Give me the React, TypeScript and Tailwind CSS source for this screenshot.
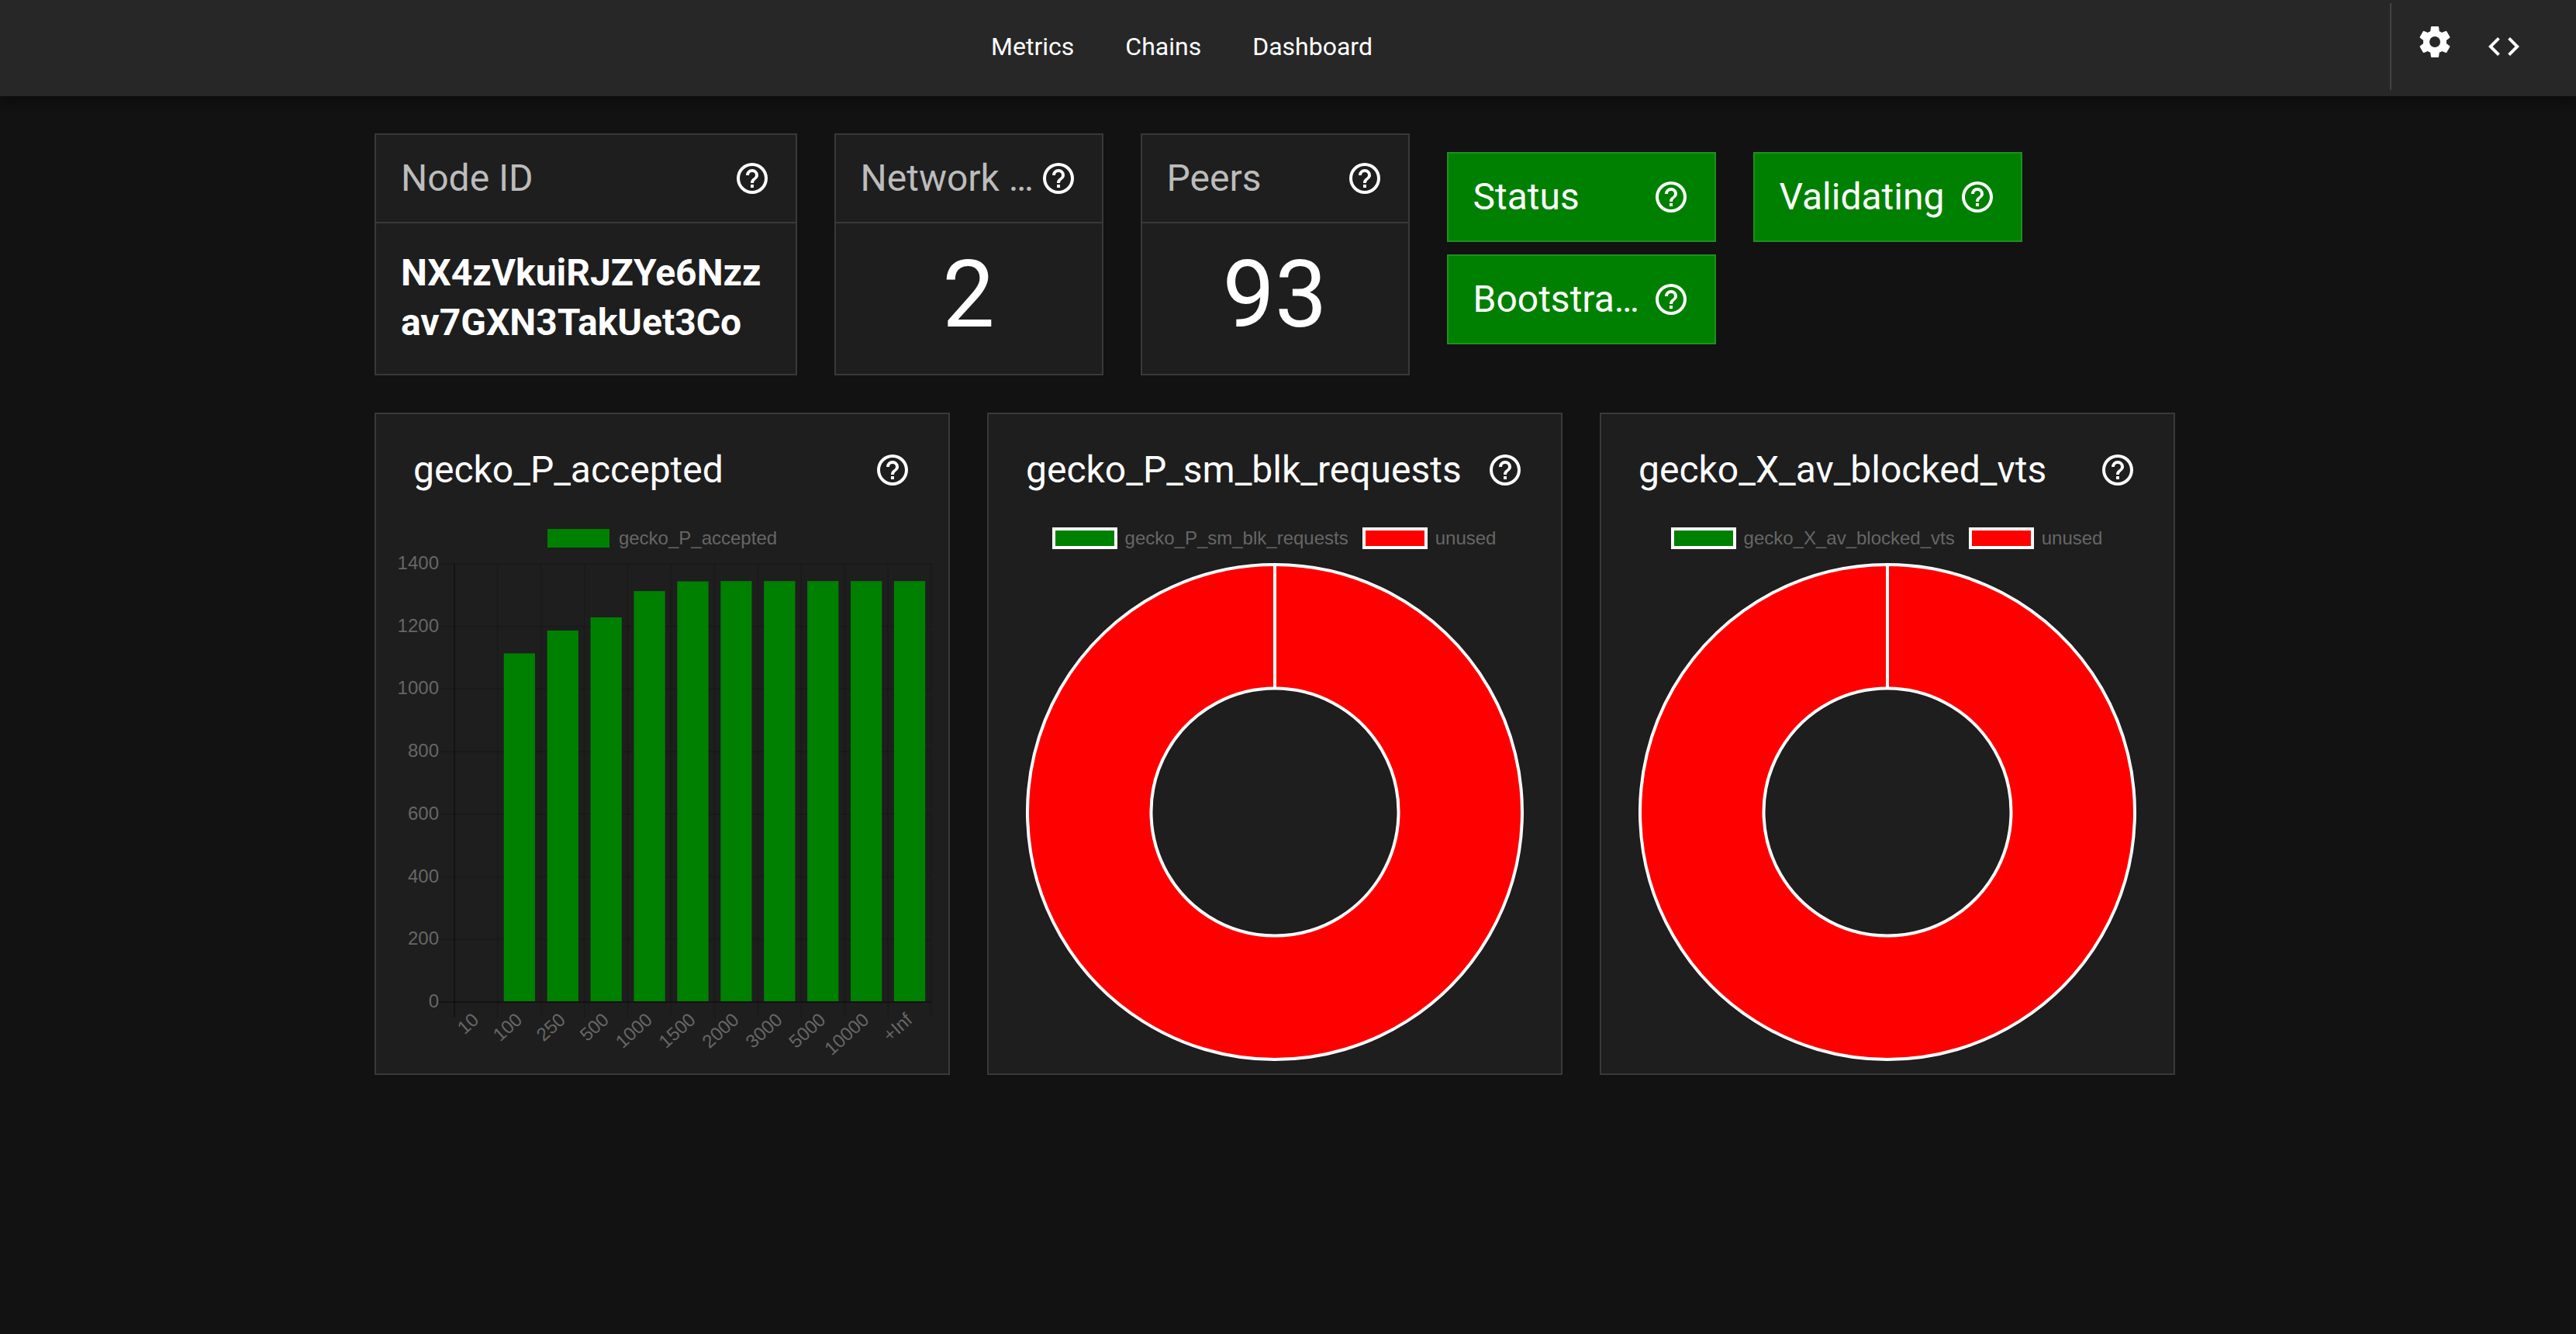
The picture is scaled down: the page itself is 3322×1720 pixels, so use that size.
import type { ReactNode } from "react";

const HELP_PATH =
  "M11,18H13V16H11V18M12,2A10,10 0 0,0 2,12A10,10 0 0,0 12,22A10,10 0 0,0 22,12A10,10 0 0,0 12,2M12,20C7.59,20 4,16.41 4,12C4,7.59 7.59,4 12,4C16.41,4 20,7.59 20,12C20,16.41 16.41,20 12,20M12,6A4,4 0 0,0 8,10H10A2,2 0 0,1 12,8A2,2 0 0,1 14,10C14,12 11,11.75 11,15H13C13,12.75 16,12.5 16,10A4,4 0 0,0 12,6Z";
const COG_PATH =
  "M12,15.5A3.5,3.5 0 0,1 8.5,12A3.5,3.5 0 0,1 12,8.5A3.5,3.5 0 0,1 15.5,12A3.5,3.5 0 0,1 12,15.5M19.43,12.97C19.47,12.65 19.5,12.33 19.5,12C19.5,11.67 19.47,11.34 19.43,11L21.54,9.37C21.73,9.22 21.78,8.95 21.66,8.73L19.66,5.27C19.54,5.05 19.27,4.96 19.05,5.05L16.56,6.05C16.04,5.66 15.5,5.32 14.87,5.07L14.5,2.42C14.46,2.18 14.25,2 14,2H10C9.75,2 9.54,2.18 9.5,2.42L9.13,5.07C8.5,5.32 7.96,5.66 7.44,6.05L4.95,5.05C4.73,4.96 4.46,5.05 4.34,5.27L2.34,8.73C2.21,8.95 2.27,9.22 2.46,9.37L4.57,11C4.53,11.34 4.5,11.67 4.5,12C4.5,12.33 4.53,12.65 4.57,12.97L2.46,14.63C2.27,14.78 2.21,15.05 2.34,15.27L4.34,18.73C4.46,18.95 4.73,19.03 4.95,18.95L7.44,17.94C7.96,18.34 8.5,18.68 9.13,18.93L9.5,21.58C9.54,21.82 9.75,22 10,22H14C14.25,22 14.46,21.82 14.5,21.58L14.87,18.93C15.5,18.67 16.04,18.34 16.56,17.94L19.05,18.95C19.27,19.03 19.54,18.95 19.66,18.73L21.66,15.27C21.78,15.05 21.73,14.78 21.54,14.63L19.43,12.97Z";
const CODE_PATH =
  "M14.6,16.6L19.2,12L14.6,7.4L16,6L22,12L16,18L14.6,16.6M9.4,16.6L4.8,12L9.4,7.4L8,6L2,12L8,18L9.4,16.6Z";

function IconButton({ path, label }: { path: string; label: string }) {
  return (
    <button type="button" aria-label={label} className="size-12 shrink-0 text-white">
      <svg viewBox="0 0 24 24" fill="currentColor" className="size-12">
        <path d={path} />
      </svg>
    </button>
  );
}

function CardHeader({ title, className }: { title: string; className: string }) {
  return (
    <div className={`flex h-28 items-center px-8 ${className}`}>
      <h2 className="min-w-0 flex-1 truncate text-5xl leading-[64px]">{title}</h2>
      <IconButton path={HELP_PATH} label={`About ${title}`} />
    </div>
  );
}

function InfoCard({ title, className, children }: { title: string; className: string; children: ReactNode }) {
  return (
    <section className={`border-2 border-[#393939] bg-[#1e1e1e] ${className}`}>
      <CardHeader title={title} className="box-content border-b-2 border-[#393939] text-[#bcbcbc]" />
      {children}
    </section>
  );
}

function StatusCard({ title }: { title: string }) {
  return (
    <section className="border-2 border-[#1f8f1f] bg-[#008000]">
      <CardHeader title={title} className="text-white" />
    </section>
  );
}

function ChartCard({ title, children }: { title: string; children: ReactNode }) {
  return (
    <section className="col-span-4 border-2 border-[#393939] bg-[#1e1e1e] pb-4">
      <div className="flex items-center px-12 pt-12 pb-8">
        <h2 className="min-w-0 flex-1 text-5xl">{title}</h2>
        <IconButton path={HELP_PATH} label={`About ${title}`} />
      </div>
      {children}
    </section>
  );
}

function LegendItem({ swatch, label }: { swatch: string; label: string }) {
  return (
    <li className="flex items-center gap-3">
      <span className={`h-6 w-20 ${swatch}`} />
      <span className="leading-6">{label}</span>
    </li>
  );
}

function Legend({ children }: { children: ReactNode }) {
  return (
    <ul className="flex justify-center gap-5 py-5 font-['Liberation_Sans',sans-serif] text-2xl text-[#666666]">
      {children}
    </ul>
  );
}

const BUCKETS = [
  { label: "10", value: 0 },
  { label: "100", value: 1114 },
  { label: "250", value: 1187 },
  { label: "500", value: 1229 },
  { label: "1000", value: 1313 },
  { label: "1500", value: 1344 },
  { label: "2000", value: 1345 },
  { label: "3000", value: 1345 },
  { label: "5000", value: 1345 },
  { label: "10000", value: 1345 },
  { label: "+Inf", value: 1345 },
];

const PLOT = { left: 101, right: 716, top: 1, bottom: 566, max: 1400 };

function BarChart() {
  const step = (PLOT.right - PLOT.left) / BUCKETS.length;
  const yOf = (v: number) => PLOT.bottom - (v / PLOT.max) * (PLOT.bottom - PLOT.top);
  const ticks = [0, 200, 400, 600, 800, 1000, 1200, 1400];
  return (
    <svg
      viewBox="0 0 738 642"
      role="img"
      aria-label="gecko_P_accepted histogram"
      className="w-full overflow-visible font-['Liberation_Sans',sans-serif] text-2xl"
    >
      {ticks.map((t) => (
        <g key={t}>
          <line
            x1={PLOT.left - 20}
            x2={PLOT.right}
            y1={yOf(t)}
            y2={yOf(t)}
            stroke="#000000"
            strokeOpacity={t === 0 ? 0.35 : 0.1}
            strokeWidth={2}
          />
          <text x={PLOT.left - 20} y={yOf(t) + 7} textAnchor="end" fill="#666666">
            {t}
          </text>
        </g>
      ))}
      {Array.from({ length: BUCKETS.length + 1 }, (_, i) => (
        <line
          key={i}
          x1={PLOT.left + i * step}
          x2={PLOT.left + i * step}
          y1={PLOT.top}
          y2={PLOT.bottom + 20}
          stroke="#000000"
          strokeOpacity={i === 0 ? 0.35 : 0.1}
          strokeWidth={2}
        />
      ))}
      {BUCKETS.map((b, i) => {
        const cx = PLOT.left + (i + 0.5) * step;
        return (
          <g key={b.label}>
            <rect
              x={cx - step * 0.36}
              y={yOf(b.value)}
              width={step * 0.72}
              height={Math.max(0, PLOT.bottom - 1 - yOf(b.value))}
              fill="#008000"
            />
            <text transform={`translate(${cx + 5} ${PLOT.bottom + 25}) rotate(-42)`} textAnchor="end" fill="#666666">
              {b.label}
            </text>
          </g>
        );
      })}
    </svg>
  );
}

function DoughnutChart({ name }: { name: string }) {
  return (
    <div className="px-12">
      <svg viewBox="0 0 642 642" role="img" aria-label={`${name} usage`} className="w-full">
        <path
          d="M321 2A319 319 0 1 1 320.99 2ZM321 161.5A159.5 159.5 0 1 0 321.01 161.5Z"
          fill="#ff0000"
          fillRule="evenodd"
          stroke="#ffffff"
          strokeWidth={4}
        />
        <line x1={321} x2={321} y1={2} y2={161.5} stroke="#ffffff" strokeWidth={4} />
      </svg>
    </div>
  );
}

function UsageCard({ name }: { name: string }) {
  return (
    <ChartCard title={name}>
      <Legend>
        <LegendItem swatch="bg-[#008000] outline-4 -outline-offset-2 outline-white" label={name} />
        <LegendItem swatch="bg-[#ff0000] outline-4 -outline-offset-2 outline-white" label="unused" />
      </Legend>
      <DoughnutChart name={name} />
    </ChartCard>
  );
}

export default function App() {
  return (
    <div className="min-h-screen bg-[#121212] font-[Roboto,sans-serif] text-white">
      <header className="flex items-center bg-[#272727] pt-1 pb-2 shadow-[0_4px_8px_-2px_rgba(0,0,0,0.2),0_8px_10px_rgba(0,0,0,0.14),0_2px_20px_rgba(0,0,0,0.12)]">
        <nav className="flex flex-1 justify-center gap-[66px] pr-[34px] text-[32px] leading-[48px]">
          <a href="#metrics">Metrics</a>
          <a href="#chains">Chains</a>
          <a href="#dashboard">Dashboard</a>
        </nav>
        <div className="flex h-28 items-center gap-[41px] border-l-2 border-[#424242] pr-[69px] pl-8">
          <div className="flex pb-3">
            <IconButton path={COG_PATH} label="Settings" />
          </div>
          <IconButton path={CODE_PATH} label="API console" />
        </div>
      </header>

      <main className="pr-[34px]">
        <div className="mx-auto grid max-w-[2370px] grid-cols-12 gap-12 px-6 py-12">
          <InfoCard title="Node ID" className="col-span-3">
            <p className="px-8 pt-8 pb-[34px] text-5xl leading-[64px] font-bold break-all">
              NX4zVkuiRJZYe6Nzzav7GXN3TakUet3Co
            </p>
          </InfoCard>
          <InfoCard title="Network ID" className="col-span-2">
            <p className="py-8 text-center text-[120px] leading-[120px]">2</p>
          </InfoCard>
          <InfoCard title="Peers" className="col-span-2">
            <p className="py-8 text-center text-[120px] leading-[120px]">93</p>
          </InfoCard>
          <div className="col-span-2 flex flex-col gap-4 pt-6">
            <StatusCard title="Status" />
            <StatusCard title="Bootstrapped" />
          </div>
          <div className="col-span-2 pt-6">
            <StatusCard title="Validating" />
          </div>

          <ChartCard title="gecko_P_accepted">
            <Legend>
              <LegendItem swatch="bg-[#008000]" label="gecko_P_accepted" />
            </Legend>
            <BarChart />
          </ChartCard>
          <UsageCard name="gecko_P_sm_blk_requests" />
          <UsageCard name="gecko_X_av_blocked_vts" />
        </div>
      </main>
    </div>
  );
}
